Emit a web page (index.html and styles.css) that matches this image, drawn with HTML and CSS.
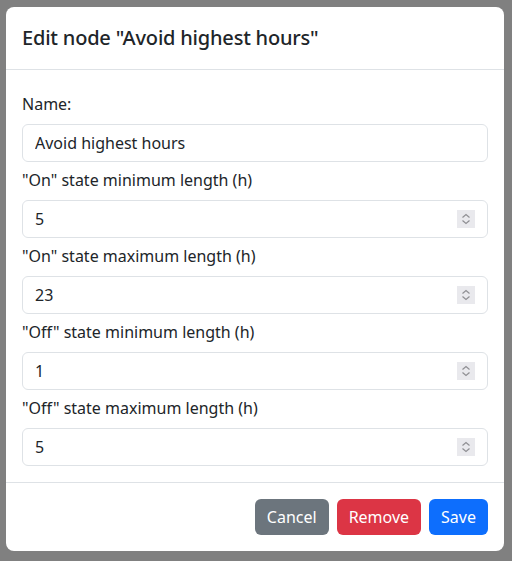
FILE: index.html
```html
<!DOCTYPE html>
<html lang="en">
<head>
    <meta charset="UTF-8">
    <meta name="viewport" content="width=device-width, initial-scale=1.0">
    <title>Edit node</title>
    <link rel="stylesheet" href="styles.css">
</head>
<body>

<!-- Edit Node Modal -->
<div class="modal-dialog">
    <div class="modal-content">
        <div class="modal-header">
            <h5 class="modal-title">Edit node "Avoid highest hours"</h5>
        </div>
        <div class="modal-body">
            <label class="form-label" for="nodeName">Name:</label>
            <input type="text" class="form-control" id="nodeName" value="Avoid highest hours">

            <label class="form-label" for="onMin">"On" state minimum length (h)</label>
            <div class="form-control number-field">
                <input type="number" id="onMin" value="5">
                <svg class="spin" width="18" height="18" viewBox="0 0 18 18"><rect width="18" height="18" fill="#e9e9ed"/><path d="M5.5 7.5L9 4.5L12.5 7.5M5.5 10.5L9 13.5L12.5 10.5" fill="none" stroke="#8f8f93" stroke-width="1.2"/></svg>
            </div>

            <label class="form-label" for="onMax">"On" state maximum length (h)</label>
            <div class="form-control number-field">
                <input type="number" id="onMax" value="23">
                <svg class="spin" width="18" height="18" viewBox="0 0 18 18"><rect width="18" height="18" fill="#e9e9ed"/><path d="M5.5 7.5L9 4.5L12.5 7.5M5.5 10.5L9 13.5L12.5 10.5" fill="none" stroke="#8f8f93" stroke-width="1.2"/></svg>
            </div>

            <label class="form-label" for="offMin">"Off" state minimum length (h)</label>
            <div class="form-control number-field">
                <input type="number" id="offMin" value="1">
                <svg class="spin" width="18" height="18" viewBox="0 0 18 18"><rect width="18" height="18" fill="#e9e9ed"/><path d="M5.5 7.5L9 4.5L12.5 7.5M5.5 10.5L9 13.5L12.5 10.5" fill="none" stroke="#8f8f93" stroke-width="1.2"/></svg>
            </div>

            <label class="form-label" for="offMax">"Off" state maximum length (h)</label>
            <div class="form-control number-field">
                <input type="number" id="offMax" value="5">
                <svg class="spin" width="18" height="18" viewBox="0 0 18 18"><rect width="18" height="18" fill="#e9e9ed"/><path d="M5.5 7.5L9 4.5L12.5 7.5M5.5 10.5L9 13.5L12.5 10.5" fill="none" stroke="#8f8f93" stroke-width="1.2"/></svg>
            </div>
        </div>
        <div class="modal-footer">
            <button class="btn btn-secondary">Cancel</button>
            <button class="btn btn-danger">Remove</button>
            <button class="btn btn-primary">Save</button>
        </div>
    </div>
</div>

</body>
</html>
```

FILE: styles.css
```css
* {
    box-sizing: border-box;
}

body {
    margin: 0;
    font-family: "Noto Sans", sans-serif;
    font-size: 16px;
    line-height: 1.5;
    color: #212529;
    background-color: #808080;
}

.modal-dialog {
    width: 498px;
    margin: 7px 0 0 6px;
}

.modal-content {
    background-color: #fff;
    border-radius: 8px;
    overflow: hidden;
}

.modal-header {
    padding: 16px;
    border-bottom: 1px solid #dee2e6;
}

.modal-title {
    margin: 0;
    font-size: 20px;
    font-weight: 500;
    line-height: 1.5;
    letter-spacing: -0.2px;
}

.modal-body {
    padding: 16px;
}

.form-label {
    display: block;
    margin: 6px 0 8px;
}

.form-control {
    display: block;
    width: 100%;
    height: 38px;
    padding: 6px 12px;
    font-family: inherit;
    font-size: 16px;
    color: #212529;
    border: 1px solid #dee2e6;
    border-radius: 6px;
    background-color: #fff;
}

.number-field {
    display: flex;
    align-items: center;
    gap: 8px;
}

.number-field input {
    flex: 1;
    min-width: 0;
    padding: 0;
    border: none;
    outline: none;
    font-family: inherit;
    font-size: 16px;
    color: #212529;
    background: transparent;
    appearance: textfield;
}

.number-field input::-webkit-inner-spin-button {
    display: none;
}

.spin {
    flex-shrink: 0;
}

.modal-footer {
    display: flex;
    justify-content: flex-end;
    padding: 12px;
    border-top: 1px solid #dee2e6;
}

.btn {
    margin: 4px;
    padding: 6px 12px;
    font-family: inherit;
    font-size: 16px;
    line-height: 1.5;
    color: #fff;
    border: none;
    border-radius: 6px;
    cursor: pointer;
}

.btn-secondary {
    background-color: #6c757d;
}

.btn-danger {
    background-color: #dc3545;
}

.btn-primary {
    background-color: #0d6efd;
}
```
